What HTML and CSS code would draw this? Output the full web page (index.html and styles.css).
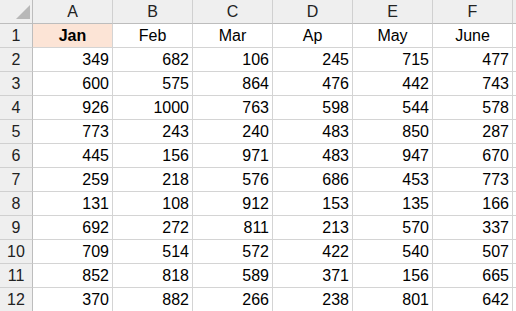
FILE: index.html
```html
<!DOCTYPE html>
<html>
<head>
<meta charset="utf-8">
<link rel="stylesheet" href="styles.css">
</head>
<body>
<div class="sheet">
  <div class="corner"><span class="tri"></span></div>
  <div class="ch">A</div><div class="ch">B</div><div class="ch">C</div><div class="ch">D</div><div class="ch">E</div><div class="ch">F</div><div class="ch edge"></div>

  <div class="rh">1</div>
  <div class="c hd sel">Jan</div><div class="c hd">Feb</div><div class="c hd">Mar</div><div class="c hd">Ap</div><div class="c hd">May</div><div class="c hd">June</div><div class="c edge"></div>

  <div class="rh">2</div>
  <div class="c">349</div><div class="c">682</div><div class="c">106</div><div class="c">245</div><div class="c">715</div><div class="c">477</div><div class="c edge"></div>

  <div class="rh">3</div>
  <div class="c">600</div><div class="c">575</div><div class="c">864</div><div class="c">476</div><div class="c">442</div><div class="c">743</div><div class="c edge"></div>

  <div class="rh">4</div>
  <div class="c">926</div><div class="c">1000</div><div class="c">763</div><div class="c">598</div><div class="c">544</div><div class="c">578</div><div class="c edge"></div>

  <div class="rh">5</div>
  <div class="c">773</div><div class="c">243</div><div class="c">240</div><div class="c">483</div><div class="c">850</div><div class="c">287</div><div class="c edge"></div>

  <div class="rh">6</div>
  <div class="c">445</div><div class="c">156</div><div class="c">971</div><div class="c">483</div><div class="c">947</div><div class="c">670</div><div class="c edge"></div>

  <div class="rh">7</div>
  <div class="c">259</div><div class="c">218</div><div class="c">576</div><div class="c">686</div><div class="c">453</div><div class="c">773</div><div class="c edge"></div>

  <div class="rh">8</div>
  <div class="c">131</div><div class="c">108</div><div class="c">912</div><div class="c">153</div><div class="c">135</div><div class="c">166</div><div class="c edge"></div>

  <div class="rh">9</div>
  <div class="c">692</div><div class="c">272</div><div class="c">811</div><div class="c">213</div><div class="c">570</div><div class="c">337</div><div class="c edge"></div>

  <div class="rh">10</div>
  <div class="c">709</div><div class="c">514</div><div class="c">572</div><div class="c">422</div><div class="c">540</div><div class="c">507</div><div class="c edge"></div>

  <div class="rh">11</div>
  <div class="c">852</div><div class="c">818</div><div class="c">589</div><div class="c">371</div><div class="c">156</div><div class="c">665</div><div class="c edge"></div>

  <div class="rh">12</div>
  <div class="c">370</div><div class="c">882</div><div class="c">266</div><div class="c">238</div><div class="c">801</div><div class="c">642</div><div class="c edge"></div>
</div>
</body>
</html>
```

FILE: styles.css
```css
html, body {
  margin: 0;
  padding: 0;
  background: #ffffff;
}
body {
  width: 516px;
  height: 311px;
  overflow: hidden;
  font-family: "Liberation Sans", Arial, sans-serif;
  font-size: 16px;
  color: #000;
}
.sheet {
  display: grid;
  grid-template-columns: 33px repeat(6, 80px) 1fr;
  grid-auto-rows: 24px;
}
.sheet > div {
  box-sizing: border-box;
  line-height: 23px;
  white-space: nowrap;
  overflow: hidden;
}
.corner {
  position: relative;
  background: #efefef;
  border-right: 1px solid #bdbdbd;
  border-bottom: 1px solid #bdbdbd;
}
.tri {
  position: absolute;
  right: 2px;
  bottom: 4px;
  width: 0;
  height: 0;
  border-left: 14px solid transparent;
  border-bottom: 14px solid #b8b8b8;
}
.ch {
  background: #efefef;
  text-align: center;
  color: #222;
  border-right: 1px solid #d0d0d0;
  border-bottom: 1px solid #bdbdbd;
}
.rh {
  background: #efefef;
  text-align: center;
  color: #222;
  border-right: 1px solid #bdbdbd;
  border-bottom: 1px solid #d0d0d0;
}
.c {
  text-align: right;
  padding-right: 3px;
  border-right: 1px solid #d4d4d4;
  border-bottom: 1px solid #d4d4d4;
}
.c.hd {
  text-align: center;
  padding-right: 0;
}
.c.sel {
  background: #fce4d6;
  font-weight: bold;
}
.edge {
  border-right: 0;
}
```
